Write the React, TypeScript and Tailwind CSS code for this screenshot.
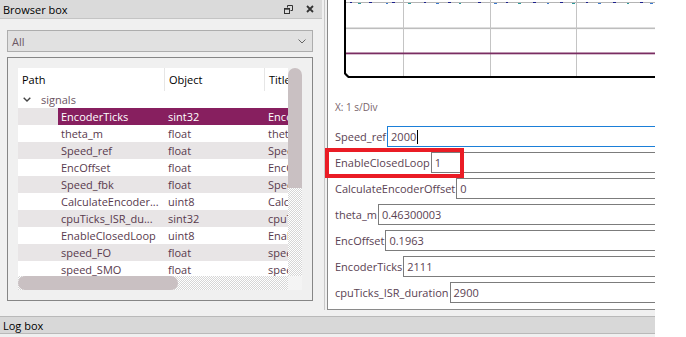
import React from 'react';

const rows = [
  { path: 'EncoderTicks', type: 'sint32', title: 'EncoderTicks' },
  { path: 'theta_m', type: 'float', title: 'theta_m' },
  { path: 'Speed_ref', type: 'float', title: 'Speed_ref' },
  { path: 'EncOffset', type: 'float', title: 'EncOffset' },
  { path: 'Speed_fbk', type: 'float', title: 'Speed_fbk' },
  { path: 'CalculateEncoder...', type: 'uint8', title: 'CalculateEncoderOffset' },
  { path: 'cpuTicks_ISR_du...', type: 'sint32', title: 'cpuTicks_ISR_duration' },
  { path: 'EnableClosedLoop', type: 'uint8', title: 'EnableClosedLoop' },
  { path: 'speed_FO', type: 'float', title: 'speed_FO' },
  { path: 'speed_SMO', type: 'float', title: 'speed_SMO' },
];

const fields = [
  { label: 'Speed_ref', value: '2000', focused: true },
  { label: 'EnableClosedLoop', value: '1' },
  { label: 'CalculateEncoderOffset', value: '0' },
  { label: 'theta_m', value: '0.46300003' },
  { label: 'EncOffset', value: '0.1963' },
  { label: 'EncoderTicks', value: '2111' },
  { label: 'cpuTicks_ISR_duration', value: '2900' },
];

// dithered scrollbar track
const checker =
  'bg-[repeating-conic-gradient(#d6d6d6_0_25%,#ffffff_0_50%)] bg-[length:2px_2px]';

function Plot() {
  const dots = [
    [22, '#1b1f8c'], [30, '#2a9a9a'], [41, '#1b1f8c'], [58, '#3a7ad0'], [64, '#1b1f8c'],
    [80, '#2a9a9a'], [96, '#1b1f8c'], [108, '#3a7ad0'], [120, '#1b1f8c'], [131, '#2a9a9a'],
    [150, '#1b1f8c'], [166, '#3a7ad0'], [178, '#1b1f8c'], [190, '#2a9a9a'], [205, '#1b1f8c'],
    [219, '#3a7ad0'], [232, '#1b1f8c'], [244, '#2a9a9a'], [258, '#1b1f8c'], [270, '#3a7ad0'],
    [285, '#1b1f8c'], [299, '#2a9a9a'], [312, '#1b1f8c'], [322, '#3a7ad0'],
  ] as const;
  return (
    <svg width="327" height="80" viewBox="0 0 327 80" className="block shrink-0 w-[327px] h-[80px] max-w-none">
      <rect x="18" y="2" width="309" height="1" fill="#b4b4b4" />
      {dots.map(([x, c], i) => (
        <rect key={i} x={x} y={i % 2 ? 3 : 2} width={i % 3 ? 3 : 2} height="1" fill={c} />
      ))}
      <rect x="18" y="27.5" width="309" height="1.6" fill="#bdbdbd" />
      <rect x="75" y="0" width="1" height="76" fill="#c4c4c4" />
      <rect x="162" y="0" width="1" height="76" fill="#c4c4c4" />
      <rect x="248" y="0" width="1" height="76" fill="#c4c4c4" />
      <rect x="18" y="52.5" width="309" height="1.8" fill="#7a2d62" />
      <rect x="16" y="0" width="2" height="74" fill="#000" />
      <rect x="20" y="76" width="307" height="2" fill="#000" />
      <path d="M17 73.5 L20.5 77" stroke="#000" strokeWidth="2.2" fill="none" />
    </svg>
  );
}

export default function App() {
  return (
    <div className="w-[686px] h-[337px] bg-white font-['Open_Sans',sans-serif] text-[11px] leading-none">
      <div className="relative w-[655px] h-[337px] bg-[#f0f0f0] flex flex-col overflow-hidden">
        <div className="flex h-[310px] shrink-0">
          {/* Browser box */}
          <div className="w-[322px] flex flex-col">
            <div className="h-[19px] bg-[#dadada] border-b border-[#c4c4c4] flex items-center justify-between pl-[3px] pr-[8px] text-black">
              <span>Browser box</span>
              <div className="flex items-center gap-[13px]">
                <svg width="9" height="9" viewBox="0 0 9 9" fill="none" stroke="#333" strokeWidth="1">
                  <path d="M3.5 2.5 V0.5 H8.5 V5.5 H6.5" />
                  <rect x="0.5" y="3.5" width="5" height="5" />
                  <line x1="0.5" y1="4.2" x2="5.5" y2="4.2" />
                </svg>
                <svg width="8" height="8" viewBox="0 0 8 8" stroke="#333" strokeWidth="1.8">
                  <path d="M1 1 L7 7 M7 1 L1 7" />
                </svg>
              </div>
            </div>

            <div className="mt-[11px] ml-[7px] w-[306px] h-[22px] bg-[#e1e1e1] border border-[#adadad] flex items-center justify-between pl-[4px] pr-[6px] text-[#6c5864]">
              <span>All</span>
              <svg width="8" height="5" viewBox="0 0 8 5" fill="none" stroke="#666" strokeWidth="1">
                <path d="M0.5 0.5 L4 4 L7.5 0.5" />
              </svg>
            </div>

            <div className="mt-[5px] ml-[7px] w-[306px] h-[244px] border border-[#868686] p-[10px] flex">
              <div className="w-[270px] flex flex-col">
                <div className="h-[208px] bg-white overflow-hidden">
                  <div className="h-[23px] flex text-black">
                    <div className="w-[147px] pl-[4px] flex items-center border-r border-[#e6e6e6]">Path</div>
                    <div className="w-[100px] pl-[4px] flex items-center border-r border-[#e6e6e6]">Object</div>
                    <div className="flex-1 pl-[4px] flex items-center overflow-hidden whitespace-nowrap">Title</div>
                  </div>
                  <div className="h-[17px] flex items-center text-[#6c5562]">
                    <svg width="8" height="5" viewBox="0 0 8 5" fill="none" stroke="#444" strokeWidth="1.4" className="ml-[5px]">
                      <path d="M0.7 0.7 L4 4 L7.3 0.7" />
                    </svg>
                    <span className="ml-[10px]">signals</span>
                  </div>
                  {rows.map((r, i) => {
                    const alt = i % 2 === 0;
                    const sel = i === 0;
                    return (
                      <div key={r.path} className={`h-[17px] flex ${alt ? 'bg-[#e8e5e6]' : 'bg-white'}`}>
                        <div className="w-[40px] shrink-0" />
                        <div className={`flex-1 flex ${sel ? 'bg-[#871f5f] text-white' : 'text-[#583a4d]'}`}>
                          <div className="w-[107px] pl-[3px] flex items-center whitespace-nowrap">{r.path}</div>
                          <div className="w-[100px] pl-[3px] flex items-center">{r.type}</div>
                          <div className="flex-1 pl-[3px] flex items-center overflow-hidden whitespace-nowrap">{r.title}</div>
                        </div>
                      </div>
                    );
                  })}
                </div>
                <div className={`h-[14px] flex ${checker}`}>
                  <div className="w-[160px] h-full rounded-full bg-[#c9c0c2]" />
                </div>
              </div>
              <div className="w-[14px] flex flex-col">
                <div className="h-[120px] rounded-t-full rounded-b-[7px] bg-[#c9c0c2]" />
                <div className={`flex-1 ${checker}`} />
                <div className="h-[14px] bg-[#f4f4f4]" />
              </div>
            </div>
          </div>

          <div className="w-[5px] flex justify-center">
            <div className="w-px bg-[#c8c8c8]" />
          </div>

          {/* Plot + variables */}
          <div className="flex-1 bg-white border-l border-b border-[#8a8a8a] flex flex-col overflow-hidden">
            <Plot />
            <div className="mt-[20px] h-[14px] pl-[7px] flex items-center text-[10px] text-[#78646a]">X: 1 s/Div</div>
            <div className="mt-[12px] flex flex-col gap-[5px] pl-[7px] text-[#5a4252]">
              {fields.map((f) => (
                <div key={f.label} className="h-[21px] flex items-stretch">
                  <span className="flex items-center pr-[1px] whitespace-nowrap">{f.label}</span>
                  <div
                    className={`flex-1 flex items-center pl-[3px] border border-r-0 ${
                      f.focused ? 'border-[#1b7fd8]' : 'border-[#7c7c7c]'
                    }`}
                  >
                    <span>{f.value}</span>
                    {f.focused && <span className="ml-px w-px h-[14px] bg-black" />}
                  </div>
                </div>
              ))}
            </div>
          </div>
        </div>

        <div className="h-[6px] shrink-0" />
        <div className="h-[18px] shrink-0 bg-[#d8d8d8] border-y border-[#b9b9b9] flex items-center pl-[3px] text-black">
          Log box
        </div>

        {/* highlight annotation */}
        <div className="absolute left-[325px] top-[148px] w-[139px] h-[30px] border-4 border-[#ea1c25]" />
      </div>
    </div>
  );
}
